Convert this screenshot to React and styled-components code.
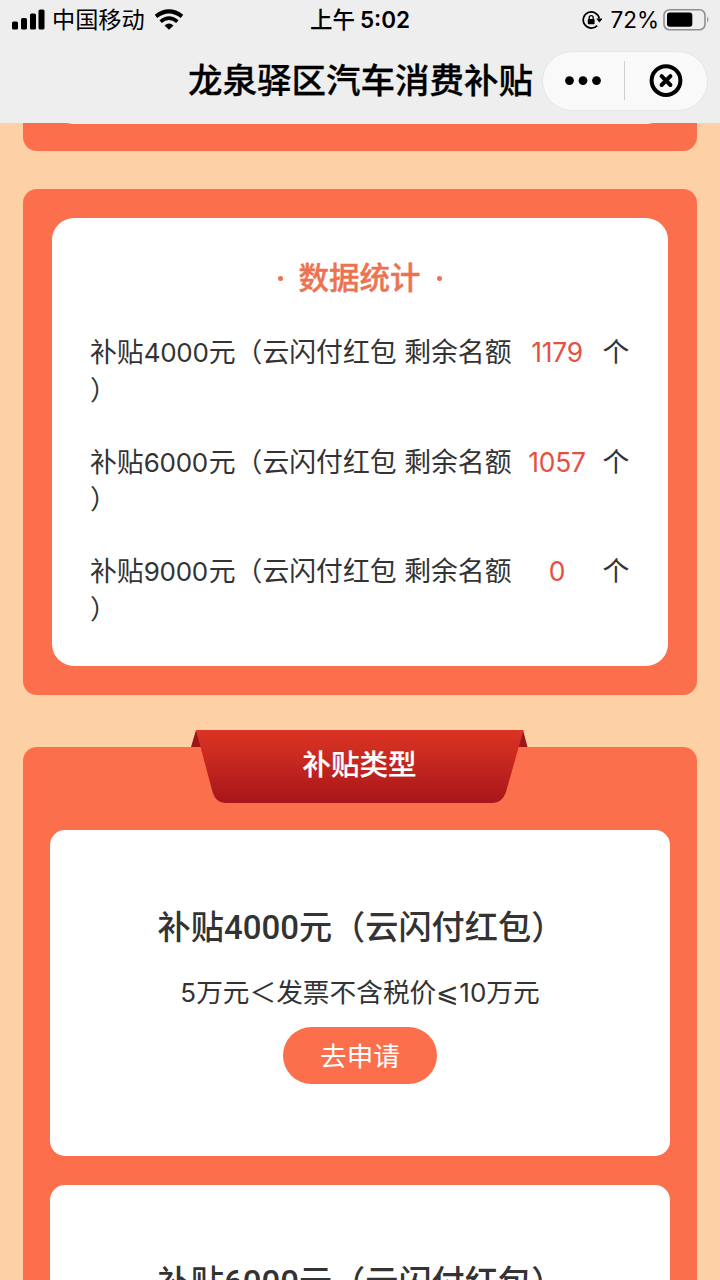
import React from 'react';
import styled, { createGlobalStyle } from 'styled-components';

const GlobalStyle = createGlobalStyle`
  * { box-sizing: border-box; }
  body {
    margin: 0;
    background: #fdd1a5;
    font-family: 'Inter', 'Noto Sans CJK SC', sans-serif;
    color: #333;
  }
`;

const Screen = styled.div`
  display: flex;
  flex-direction: column;
  width: 720px;
  height: 1280px;
  overflow: hidden;
  background: #fdd1a5;
`;

const Header = styled.header`
  flex: none;
  height: 123px;
  background: #eee;
  color: #000;
`;

const StatusBar = styled.div`
  display: grid;
  grid-template-columns: 1fr auto 1fr;
  align-items: center;
  height: 40px;
  padding: 0 10px 0 12px;
`;

const StatusGroup = styled.div`
  display: flex;
  align-items: center;
  justify-content: ${(p) => (p.$end ? 'flex-end' : 'flex-start')};
`;

const Carrier = styled.span`
  margin: 0 9px 0 7px;
  font-size: 23.2px;
  line-height: 40px;
`;

const Clock = styled.span`
  margin-right: 2px;
  font-size: 22.5px;
  font-weight: 500;
  line-height: 40px;
  white-space: nowrap;
`;

const ClockDigits = styled.span`
  margin-left: 5px;
  font-weight: 600;
  font-size: 22.5px;
`;

const BatteryLevel = styled.span`
  margin: 0 4px 0 8px;
  font-size: 22.5px;
  line-height: 40px;
`;

const NavBar = styled.div`
  display: flex;
  align-items: center;
  justify-content: flex-end;
  height: 81px;
  padding-right: 12px;
`;

const NavTitle = styled.h1`
  margin: 0 9px 0 0;
  font-size: 34.5px;
  font-weight: 500;
  line-height: 80px;
  white-space: nowrap;
  -webkit-text-stroke: 0.3px currentColor;
`;

const Capsule = styled.div`
  display: flex;
  align-items: center;
  width: 166px;
  height: 60px;
  border: 1px solid #e6e6e6;
  border-radius: 30px;
  background: #f9f9f9;
`;

const CapsuleButton = styled.button`
  display: flex;
  flex: none;
  align-items: center;
  justify-content: center;
  width: ${(p) => p.$width}px;
  height: 100%;
  padding: 0;
  border: 0;
  background: none;
`;

const CapsuleDivider = styled.i`
  width: 1px;
  height: 39px;
  background: #cfcfcf;
`;

const Content = styled.main`
  display: flex;
  flex: 1;
  flex-direction: column;
  min-height: 0;
  padding: 0 23px;
`;

const Panel = styled.section`
  flex: none;
  border-radius: 14px;
  background: #fc6f4d;
`;

const ScrolledPanel = styled(Panel)`
  height: 28px;
  margin-bottom: 38px;
  padding: 0 29px;
  border-radius: 0 0 14px 14px;
  overflow: hidden;
`;

const ScrolledCard = styled.div`
  height: 60px;
  margin-top: -59px;
  border-radius: 22px;
  background: #eee;
`;

const StatsPanel = styled(Panel)`
  height: 506px;
  padding: 29px;
`;

const StatsCard = styled.div`
  height: 448px;
  padding: 36px 37px 0 38px;
  border-radius: 22px;
  background: #fff;
`;

const StatsTitle = styled.h2`
  display: flex;
  justify-content: center;
  gap: 14px;
  margin: 0 2px 32px 0;
  color: #ec7350;
  font-size: 30.5px;
  font-weight: 500;
  line-height: 48px;
  -webkit-text-stroke: 0.4px currentColor;
`;

const TitleDot = styled.i`
  align-self: center;
  width: 5px;
  height: 5px;
  margin: 0 2px;
  border-radius: 50%;
  background: #ec7350;
`;

const StatRow = styled.div`
  height: 109.5px;
  font-size: 26.85px;
  line-height: 37.5px;
  white-space: nowrap;
`;

const Amount = styled.span`
  display: inline-block;
  width: 65px;
  font-size: 26px;
  letter-spacing: -0.3px;
  line-height: 1;
`;

const CardAmount = styled(Amount)`
  width: 75px;
  font-family: 'Roboto', sans-serif;
  font-size: 33px;
  letter-spacing: 0;
`;

const Count = styled.span`
  display: inline-block;
  width: 91px;
  color: #e5503f;
  font-size: 26.4px;
  letter-spacing: -0.2px;
  line-height: 1;
  text-align: center;
`;

const TypePanel = styled(Panel)`
  margin-top: 52px;
  padding: 0 27px;
  border-radius: 14px 14px 0 0;
`;

const Ribbon = styled.div`
  position: relative;
  width: 337px;
  height: 74px;
  margin: -18px 0 0 141px;
`;

const RibbonShape = styled.svg`
  display: block;
`;

const RibbonLabel = styled.h2`
  position: absolute;
  inset: 0;
  margin: 0;
  color: #fff;
  font-size: 28.5px;
  font-weight: 500;
  line-height: 72px;
  text-align: center;
  -webkit-text-stroke: 0.2px currentColor;
`;

const TypeCard = styled.article`
  display: flex;
  flex-direction: column;
  align-items: center;
  height: 326px;
  margin-top: ${(p) => (p.$first ? 27 : 29)}px;
  padding-top: 72px;
  border-radius: 15px;
  background: #fff;
`;

const TypeName = styled.h3`
  width: 405px;
  margin: 0;
  font-size: 33.2px;
  font-weight: 500;
  line-height: 51px;
  white-space: nowrap;
`;

const TypeRule = styled.p`
  margin: 19px 0 14px;
  font-size: 26.7px;
  line-height: 40px;
  white-space: nowrap;
`;

const RuleDigits = styled.span`
  font-size: 26px;
`;

const ApplyButton = styled.button`
  flex: none;
  width: 154px;
  height: 57px;
  padding: 0 0 2px;
  border: 0;
  border-radius: 29px;
  background: #fc6f4d;
  color: #fff;
  font: 400 26.6px/55px 'Noto Sans CJK SC', sans-serif;
`;

const stats = [
  { amount: '4000', left: '1179' },
  { amount: '6000', left: '1057' },
  { amount: '9000', left: '0' },
];

function SignalIcon() {
  return (
    <svg width="33" height="22" viewBox="0 0 33 22">
      <rect x="0" y="12.5" width="6" height="8" rx="1.6" />
      <rect x="9" y="9" width="6" height="11.5" rx="1.6" />
      <rect x="18" y="4.5" width="6" height="16" rx="1.6" />
      <rect x="26.5" y=".5" width="6" height="20" rx="1.6" />
    </svg>
  );
}

function WifiIcon() {
  return (
    <svg width="30" height="22" viewBox="0 0 30 22">
      <path d="M2 7.4Q15-2.6 28 7.4" fill="none" stroke="#000" strokeWidth="4" />
      <path d="M6.6 12.6Q15 5.5 23.4 12.6" fill="none" stroke="#000" strokeWidth="3.6" />
      <path d="M10.5 16.6Q15 12.6 19.5 16.6L15 20.8Z" />
    </svg>
  );
}

function RotationLockIcon() {
  return (
    <svg width="20" height="20" viewBox="0 0 20 20">
      <path d="M15.2 15.6A8.1 8.1 0 1 1 17.3 8.5" fill="none" stroke="#000" strokeWidth="1.7" />
      <path d="M14.2 8.6H20.4L17.4 12.6Z" />
      <rect x="5.8" y="9" width="6.8" height="5.2" rx=".8" />
      <path d="M7.2 9V7.7a2 2 0 0 1 4 0V9" fill="none" stroke="#000" strokeWidth="1.3" />
    </svg>
  );
}

function BatteryIcon() {
  return (
    <svg width="47" height="22" viewBox="0 0 47 22">
      <rect x="1" y=".8" width="41" height="20" rx="5.5" fill="none" stroke="#8f8f8f" strokeWidth="1.6" />
      <rect x="4" y="3.6" width="25.3" height="14.2" rx="2.8" />
      <path d="M44.2 7.4q2.6 3.2 0 6.4z" fill="#8f8f8f" />
    </svg>
  );
}

function RibbonBanner() {
  return (
    <Ribbon>
      <RibbonShape width="337" height="74" viewBox="0 0 337 74">
        <defs>
          <linearGradient id="ribbon" x1="0" y1="0" x2="0" y2="1">
            <stop offset="0" stopColor="#db3424" />
            <stop offset=".3" stopColor="#cc2c20" />
            <stop offset="1" stopColor="#a8151a" />
          </linearGradient>
        </defs>
        <path d="M5 1L0 18H12ZM332 1L336.5 18H325Z" fill="#9d1517" />
        <path d="M5 1H332.5L315 63Q311 74 302 74H34Q25 74 21.5 63Z" fill="url(#ribbon)" />
      </RibbonShape>
      <RibbonLabel>补贴类型</RibbonLabel>
    </Ribbon>
  );
}

function SubsidyCard({ amount, first }) {
  return (
    <TypeCard $first={first}>
      <TypeName>
        补贴<CardAmount>{amount}</CardAmount>元（云闪付红包）
      </TypeName>
      <TypeRule>
        <RuleDigits>5</RuleDigits>万元＜发票不含税价⩽<RuleDigits>10</RuleDigits>万元
      </TypeRule>
      <ApplyButton>去申请</ApplyButton>
    </TypeCard>
  );
}

export default function App() {
  return (
    <>
      <GlobalStyle />
      <Screen>
        <Header>
          <StatusBar>
            <StatusGroup>
              <SignalIcon />
              <Carrier>中国移动</Carrier>
              <WifiIcon />
            </StatusGroup>
            <Clock>上午<ClockDigits>5:02</ClockDigits></Clock>
            <StatusGroup $end>
              <RotationLockIcon />
              <BatteryLevel>72%</BatteryLevel>
              <BatteryIcon />
            </StatusGroup>
          </StatusBar>
          <NavBar>
            <NavTitle>龙泉驿区汽车消费补贴</NavTitle>
            <Capsule>
              <CapsuleButton $width={81}>
                <svg width="38" height="10" viewBox="0 0 38 10">
                  <circle cx="4.5" cy="4.6" r="4.4" />
                  <circle cx="18" cy="4.6" r="4.4" />
                  <circle cx="31.5" cy="4.6" r="4.4" />
                </svg>
              </CapsuleButton>
              <CapsuleDivider />
              <CapsuleButton $width={82}>
                <svg width="34" height="34" viewBox="0 0 34 34" fill="none" stroke="#000" strokeWidth="4">
                  <circle cx="17" cy="16.6" r="14.4" />
                  <path d="M12.6 12.2l8.8 8.8M21.4 12.2l-8.8 8.8" strokeLinecap="round" />
                </svg>
              </CapsuleButton>
            </Capsule>
          </NavBar>
        </Header>
        <Content>
          <ScrolledPanel>
            <ScrolledCard />
          </ScrolledPanel>
          <StatsPanel>
            <StatsCard>
              <StatsTitle><TitleDot />数据统计<TitleDot /></StatsTitle>
              {stats.map((row) => (
                <StatRow key={row.amount}>
                  补贴<Amount>{row.amount}</Amount>元（云闪付红包 剩余名额
                  <Count>{row.left}</Count>个
                  <br />）
                </StatRow>
              ))}
            </StatsCard>
          </StatsPanel>
          <TypePanel>
            <RibbonBanner />
            <SubsidyCard amount="4000" first />
            <SubsidyCard amount="6000" />
          </TypePanel>
        </Content>
      </Screen>
    </>
  );
}
